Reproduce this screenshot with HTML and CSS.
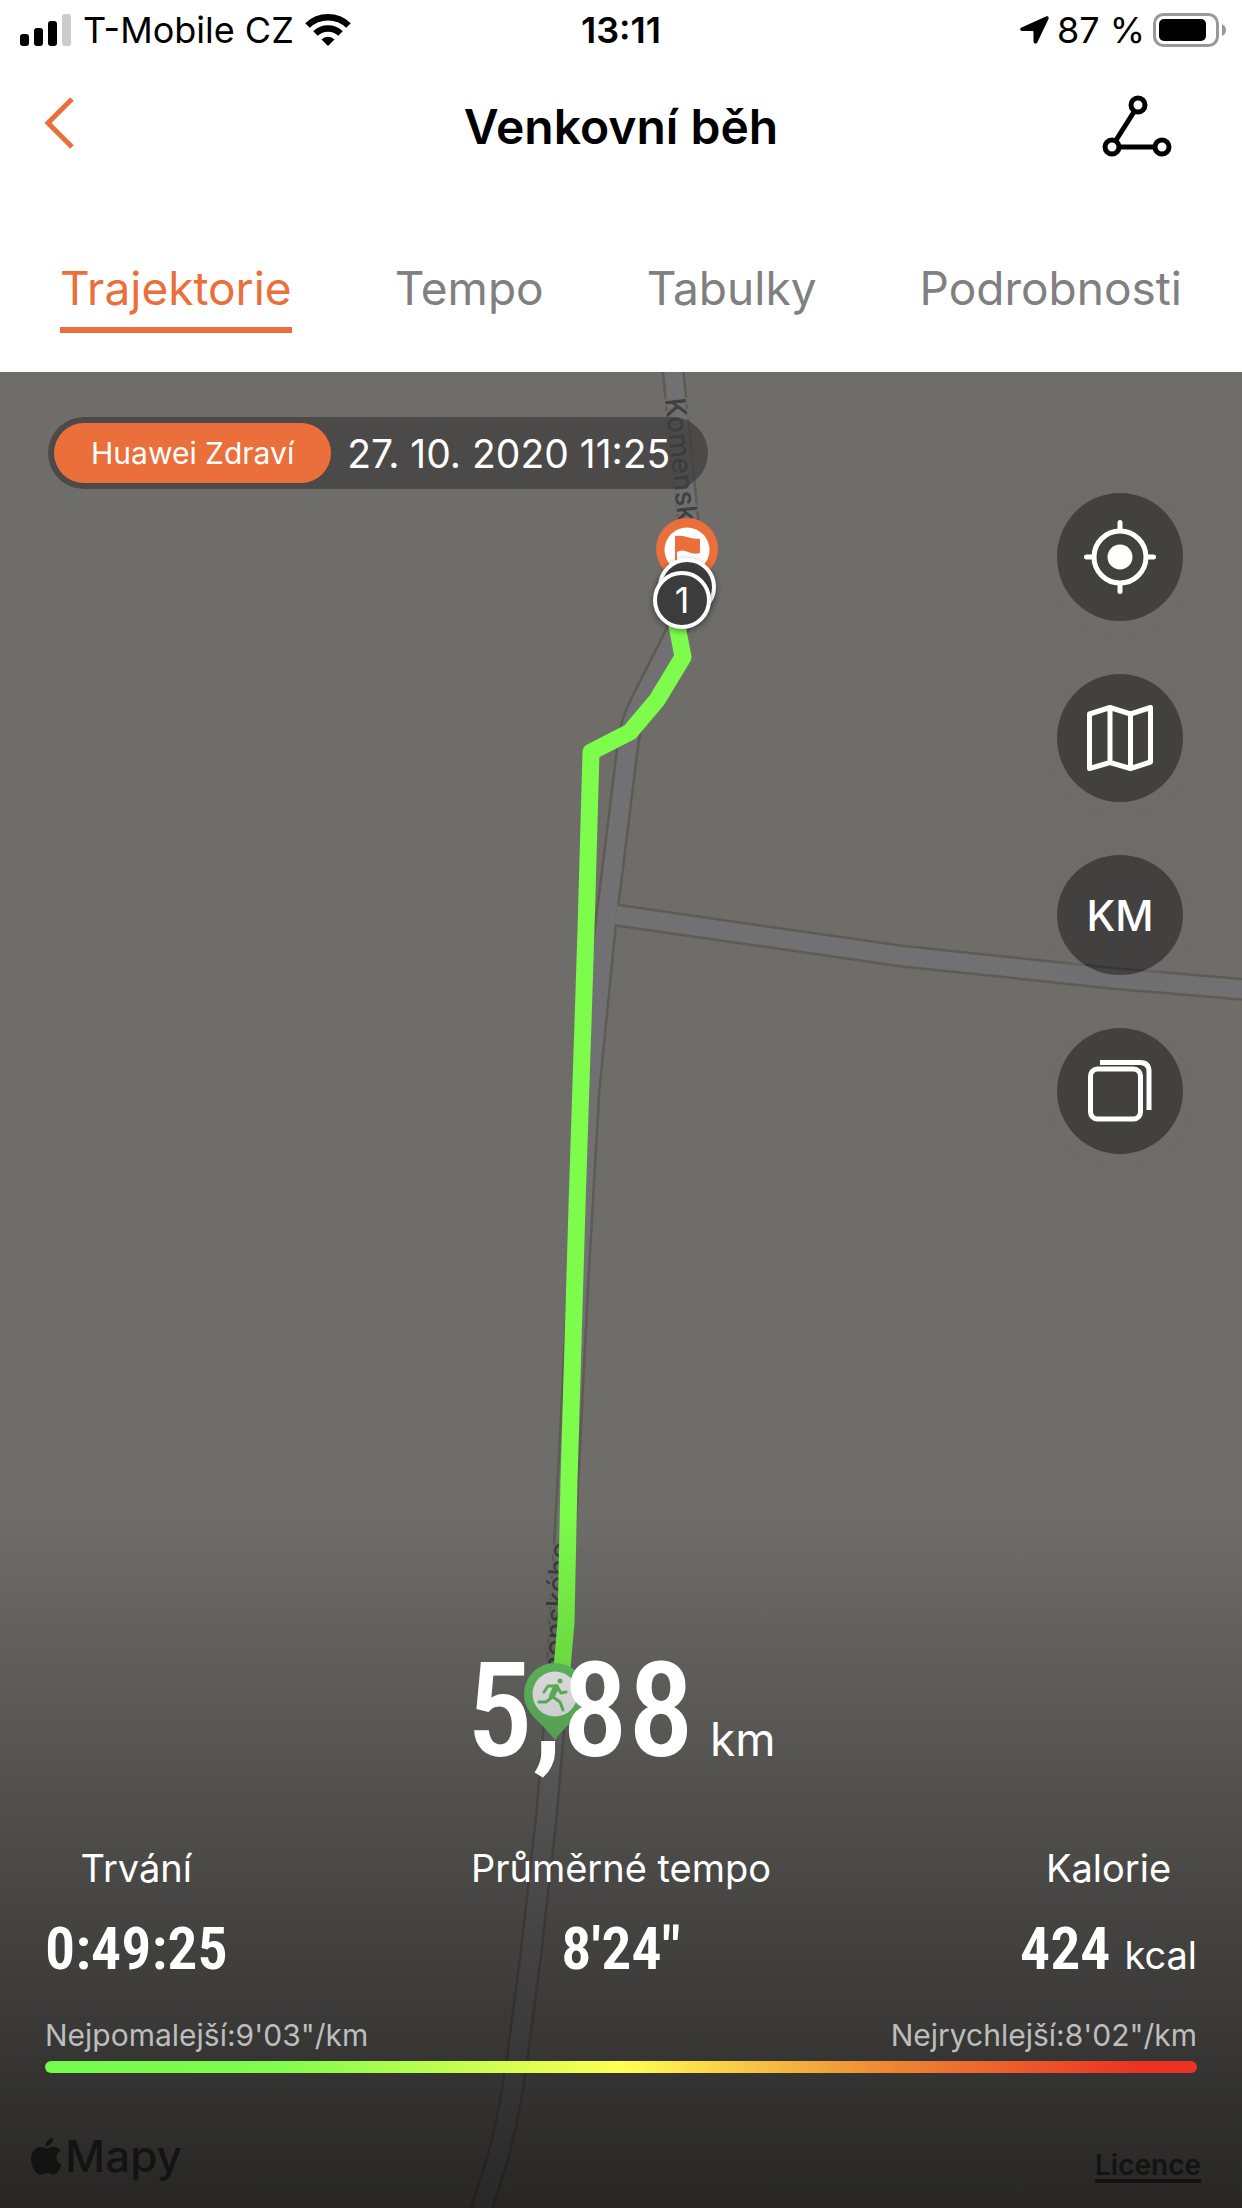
FILE: index.html
```html
<!DOCTYPE html>
<html lang="cs">
<head>
  <meta charset="UTF-8">
  <title>Venkovní běh</title>
  <meta name="viewport" content="width=device-width, initial-scale=1.0">
  <link rel="stylesheet" href="styles.css">
</head>
<body>
  <header class="top">
    <div class="status-bar">
      <div class="status-left">
        <svg width="52" height="34" viewBox="0 0 52 34" aria-hidden="true">
          <rect x="0" y="21" width="9" height="12" rx="3"/>
          <rect x="14" y="15" width="9" height="18" rx="3"/>
          <rect x="28" y="8" width="9" height="25" rx="3"/>
          <rect x="42" y="1" width="9" height="32" rx="3" fill="#ccc"/>
        </svg>
        <span class="carrier">T-Mobile CZ</span>
        <svg width="46" height="34" viewBox="0 0 46 34" aria-hidden="true">
          <path d="M23 33l-6.500-6.500a9 9 0 0 1 13 0z"/>
          <path d="M10.500 20.500a18 18 0 0 1 25 0M2.500 12.500a29.500 29.500 0 0 1 41 0" fill="none" stroke="#000" stroke-width="6.500"/>
        </svg>
      </div>
      <time class="clock">13:11</time>
      <div class="status-right">
        <svg width="29" height="28" viewBox="0 0 29 28" aria-hidden="true">
          <path d="M26 0.500L1.500 11.500C-0.500 12.500 0 15 2 15H12.500q1 0 1 1V25c0 3 3 3.500 4 1L28.500 3C29 1 28 0 26 0.500z"/>
        </svg>
        <span class="battery-text">87 %</span>
        <svg width="74" height="34" viewBox="0 0 74 34" aria-hidden="true">
          <rect x="1.500" y="1.500" width="63" height="31" rx="9" fill="none" stroke="#999" stroke-width="3"/>
          <rect x="6" y="6" width="47" height="22" rx="5"/>
          <path d="M69 11q4 2 4 6t-4 6z" fill="#999"/>
        </svg>
      </div>
    </div>

    <div class="nav-bar">
      <button class="icon-btn" aria-label="Zpět">
        <svg width="30" height="58" viewBox="0 0 30 58"><path d="M28 2L4 26L28 50" fill="none" stroke="#eb6f3a" stroke-width="5"/></svg>
      </button>
      <h1>Venkovní běh</h1>
      <button class="icon-btn" aria-label="Trasa">
        <svg width="70" height="62" viewBox="0 0 70 62" fill="none" stroke="#000" stroke-width="5">
          <circle cx="36" cy="10" r="7"/>
          <circle cx="10" cy="52" r="7"/>
          <circle cx="60" cy="52" r="7"/>
          <path d="M32.500 16L13.500 46M17 52H53"/>
        </svg>
      </button>
    </div>

    <nav class="tabs">
      <a href="#trajektorie" class="active">Trajektorie</a>
      <a href="#tempo">Tempo</a>
      <a href="#tabulky">Tabulky</a>
      <a href="#podrobnosti">Podrobnosti</a>
    </nav>
  </header>

  <main class="track" id="trajektorie">
    <svg class="map" viewBox="0 372 1242 1836" preserveAspectRatio="xMidYMid slice" aria-hidden="true">
      <defs>
        <path id="road" d="M672 360L688 520Q692 590 676 633L641 702Q630 722 627 752L605 930L589 1091L578 1283L568 1480L553 1740L546 1820L531 1953L517 2060Q507 2130 494 2170L478 2220"/>
        <path id="branch" d="M616 915L901 956L1120 979L1250 990"/>
        <path id="name-top" d="M665 399L682 560"/>
        <path id="name-bottom" d="M561 1716L571 1514"/>
      </defs>
      <!-- roads: edge first, surface on top -->
      <g class="road-edge"><use href="#road"/><use href="#branch"/></g>
      <g class="road-fill"><use href="#road"/><use href="#branch"/></g>
      <text class="street"><textPath href="#name-top">Komenského</textPath></text>
      <text class="street"><textPath href="#name-bottom">Komenského</textPath></text>

      <path class="route" d="M675 615L683 657L657 700L630 732L591 752L586 930L577 1206L569 1480L566 1622L561 1680"/>

      <!-- start -->
      <path d="M555 1663a31 31 0 0 1 31 31c0 20-17 27-31 46c-14-19-31-26-31-46a31 31 0 0 1 31-31z" fill="#6acb68"/>
      <circle cx="555" cy="1694" r="22.500" fill="#fff"/>
      <g fill="none" stroke="#6acb68" stroke-linecap="round" stroke-linejoin="round">
        <circle cx="560" cy="1681" r="2.500" fill="#6acb68" stroke="none"/>
        <path d="M556 1687L552 1696" stroke-width="6"/>
        <path d="M555 1686L548 1686L544 1692M558 1688L561 1693L566 1692M551 1698L546 1702L539 1702M553 1697L560 1702L563 1710" stroke-width="3"/>
      </g>

      <!-- finish and km marks -->
      <circle cx="687" cy="549" r="31" fill="#eb6f3a"/>
      <path d="M660 564L687 597L714 564z" fill="#eb6f3a"/>
      <circle cx="687" cy="550" r="22.500" fill="#fff"/>
      <path d="M675 536q6-1 12 1t13 2v14q-6 2-12-1t-11 0v10h-2z" fill="#eb6f3a"/>
      <g class="km-mark">
        <circle cx="687" cy="587" r="27"/>
        <circle cx="682" cy="600" r="27"/>
        <text x="682" y="613">1</text>
      </g>
    </svg>

    <div class="map-top">
      <div class="source">
        <span class="source-name">Huawei Zdraví</span>
        <time class="source-date">27. 10. 2020 11:25</time>
      </div>
    </div>

    <div class="tools">
      <button class="tool" aria-label="Moje poloha">
        <svg width="72" height="74" viewBox="0 0 72 74" fill="none" stroke="#fff" stroke-width="5" stroke-linecap="round">
          <circle cx="36" cy="37" r="26"/>
          <circle cx="36" cy="37" r="12.500" fill="#fff" stroke="none"/>
          <path d="M36 2.500V9M36 65V71.500M2.500 37H9M63 37H69.500"/>
        </svg>
      </button>
      <button class="tool" aria-label="Typ mapy">
        <svg width="68" height="66" viewBox="0 0 68 66" fill="none" stroke="#fff" stroke-width="5" stroke-linejoin="round">
          <path d="M3.500 9L24 2.500L44.500 9L64.500 2.500V57L44.500 63.500L24 57.500L3.500 63.500zM24 2.500V57.500M44.500 9V63.500"/>
        </svg>
      </button>
      <button class="tool tool-km">KM</button>
      <button class="tool tool-layers" aria-label="Vrstvy">
        <svg width="64" height="62" viewBox="0 0 64 62" fill="none" stroke="#fff" stroke-width="5">
          <rect x="2.500" y="9" width="50" height="50" rx="7"/>
          <path d="M12 2.500H52q9 0 9 9V50"/>
        </svg>
      </button>
    </div>

    <section class="summary">
      <div class="distance"><span class="big">5,88</span><span class="unit">km</span></div>

      <div class="stats">
        <div class="stat">
          <span class="label">Trvání</span>
          <span class="value">0:49:25</span>
        </div>
        <div class="stat">
          <span class="label">Průměrné tempo</span>
          <span class="value">8'24"</span>
        </div>
        <div class="stat">
          <span class="label">Kalorie</span>
          <span class="value">424 <small>kcal</small></span>
        </div>
      </div>

      <div class="pace-range">
        <span>Nejpomalejší:9'03"/km</span>
        <span>Nejrychlejší:8'02"/km</span>
      </div>
      <div class="pace-bar"></div>

      <footer class="map-credit">
        <div class="maps-logo">
          <svg width="31" height="37" viewBox="0 0 31 37" aria-hidden="true">
            <path d="M22 0c.3 4-3.500 8.500-7.500 8.500C14 4.500 18 .5 22 0zM15.500 10.500c1.500 0 3.500-1.800 7-1.800 3 0 5.500 1.600 7 3.800-6 3.500-5 11.500 1.200 14C29 31 26 36.500 22.500 36.500c-2.500 0-3.500-1.500-6.500-1.500s-4 1.500-6.500 1.500C5 36.500 0 28.500 0 21 0 13.500 4.500 9 9.500 9c2.800 0 4.500 1.500 6 1.500z"/>
          </svg>
          <span>Mapy</span>
        </div>
        <a href="#licence" class="licence">Licence</a>
      </footer>
    </section>
  </main>
</body>
</html>
```
FILE: styles.css
```css
* {
  box-sizing: border-box;
}

body {
  margin: 0;
  min-height: 100vh;
  display: flex;
  flex-direction: column;
  font-family: Inter, "Liberation Sans", sans-serif;
  background: #fff;
  color: #000;
}

button {
  border: none;
  background: none;
  padding: 0;
  font-family: inherit;
  cursor: pointer;
}

svg {
  display: block;
}

/* top part */
.status-bar {
  display: grid;
  grid-template-columns: 1fr auto 1fr;
  align-items: center;
  height: 60px;
  padding: 0 15px;
  font-size: 36px;
}

.status-left, .status-right {
  display: flex;
  align-items: center;
}

.status-left {
  gap: 11px;
  padding-left: 5px;
}

.status-right {
  justify-content: flex-end;
  gap: 8px;
}

.clock {
  font-weight: 600;
}

.nav-bar {
  display: flex;
  justify-content: space-between;
  align-items: center;
  height: 132px;
  padding: 0 44px;
}

.nav-bar h1 {
  margin: 0;
  font-size: 48px;
  font-weight: 600;
}

.icon-btn {
  display: flex;
  width: 96px;
}

.tabs {
  display: flex;
  justify-content: space-between;
  padding: 64px 60px 39px;
}

.tabs a {
  height: 77px;
  line-height: 64px;
  font-size: 46px;
  color: #808080;
  text-decoration: none;
}

.tabs .active {
  color: #eb6f3a;
  border-bottom: 6px solid #eb6f3a;
}

/* map */
.track {
  position: relative;
  flex: 1;
  display: flex;
  flex-direction: column;
  background: #6e6d69;
  color: #fff;
}

.map {
  position: absolute;
  top: 0;
  left: 0;
  width: 100%;
  height: 100%;
}

.road-edge, .road-fill {
  fill: none;
  stroke: #5f5b54;
  stroke-width: 23;
}

.road-fill {
  stroke: #717173;
  stroke-width: 18;
}

.street {
  font-size: 28px;
  font-weight: 500;
  fill: #404040;
  stroke: #6e6e6e;
  stroke-width: 4;
  paint-order: stroke;
}

.route {
  fill: none;
  stroke: #7dfc4c;
  stroke-width: 17;
  stroke-linejoin: round;
}

.km-mark circle {
  fill: #3c3c3c;
  stroke: #fff;
  stroke-width: 4;
  filter: drop-shadow(0 2px 3px rgba(0, 0, 0, 0.4));
}

.km-mark text {
  fill: #fff;
  font-size: 36px;
  text-anchor: middle;
}

.map-top {
  position: relative;
  padding: 45px 48px 0;
}

.source {
  display: inline-flex;
  align-items: center;
  height: 72px;
  padding: 6px 38px 6px 6px;
  border-radius: 36px;
  background: rgba(60, 60, 60, 0.7);
}

.source-name {
  height: 60px;
  line-height: 60px;
  padding: 0 37px;
  border-radius: 30px;
  background: #eb6f3a;
  font-size: 30px;
}

.source-date {
  margin-left: 16px;
  font-size: 39px;
}

.tools {
  position: relative;
  align-self: flex-end;
  display: flex;
  flex-direction: column;
  gap: 53px;
  padding: 4px 59px 0;
}

.tool {
  display: flex;
  align-items: center;
  justify-content: center;
  width: 126px;
  height: 128px;
  border-radius: 50%;
  background: rgba(0, 0, 0, 0.4);
  box-shadow: 0 6px 16px rgba(110, 110, 115, 0.6);
  color: #fff;
}

.tool-km {
  height: 120px;
  font-size: 42px;
  font-weight: 500;
}

.tool-layers {
  height: 126px;
}

/* summary over the map */
.summary {
  position: relative;
  margin-top: auto;
  padding: 120px 45px 24px;
  background: linear-gradient(rgba(0, 0, 0, 0), rgba(0, 0, 0, 0.65));
}

.distance {
  display: flex;
  justify-content: center;
  align-items: baseline;
  gap: 16px;
  line-height: 160px;
}

.big, .value {
  font-family: "Roboto Condensed", "Liberation Sans Narrow", "Liberation Sans", sans-serif;
  font-weight: 600;
}

.big {
  font-size: 132px;
  font-weight: 500;
}

.unit {
  font-size: 46px;
}

.stats {
  display: grid;
  grid-template-columns: 1fr auto 1fr;
  margin-top: 24px;
}

.stat {
  display: flex;
  flex-direction: column;
  align-items: center;
}

.stat:first-child {
  justify-self: start;
}

.stat:last-child {
  justify-self: end;
}

.label {
  font-size: 38px;
  line-height: 50px;
}

.value {
  font-size: 60px;
  line-height: 112px;
}

.value small {
  font-family: Inter, "Liberation Sans", sans-serif;
  font-size: 38px;
  font-weight: 400;
}

.pace-range {
  display: flex;
  justify-content: space-between;
  margin-top: 4px;
  font-size: 30px;
  line-height: 40px;
  color: #bdbdbd;
}

.pace-bar {
  height: 12px;
  margin-top: 6px;
  border-radius: 6px;
  background: linear-gradient(to right, #73fb4c, #80fc4d 20%, #ffff54 50%, #ee8332 74%, #eb3223 95%);
}

.map-credit {
  display: flex;
  justify-content: space-between;
  align-items: baseline;
  margin: 55px -4px 0 -14px;
  color: #131313;
}

.maps-logo {
  display: flex;
  align-items: center;
  gap: 3px;
  font-size: 44px;
  font-weight: 500;
  line-height: 56px;
}

.maps-logo svg {
  fill: #131313;
}

.licence {
  color: #131313;
  font-size: 28px;
  font-weight: 600;
  text-underline-offset: 4px;
  text-decoration-thickness: 4px;
}
```
